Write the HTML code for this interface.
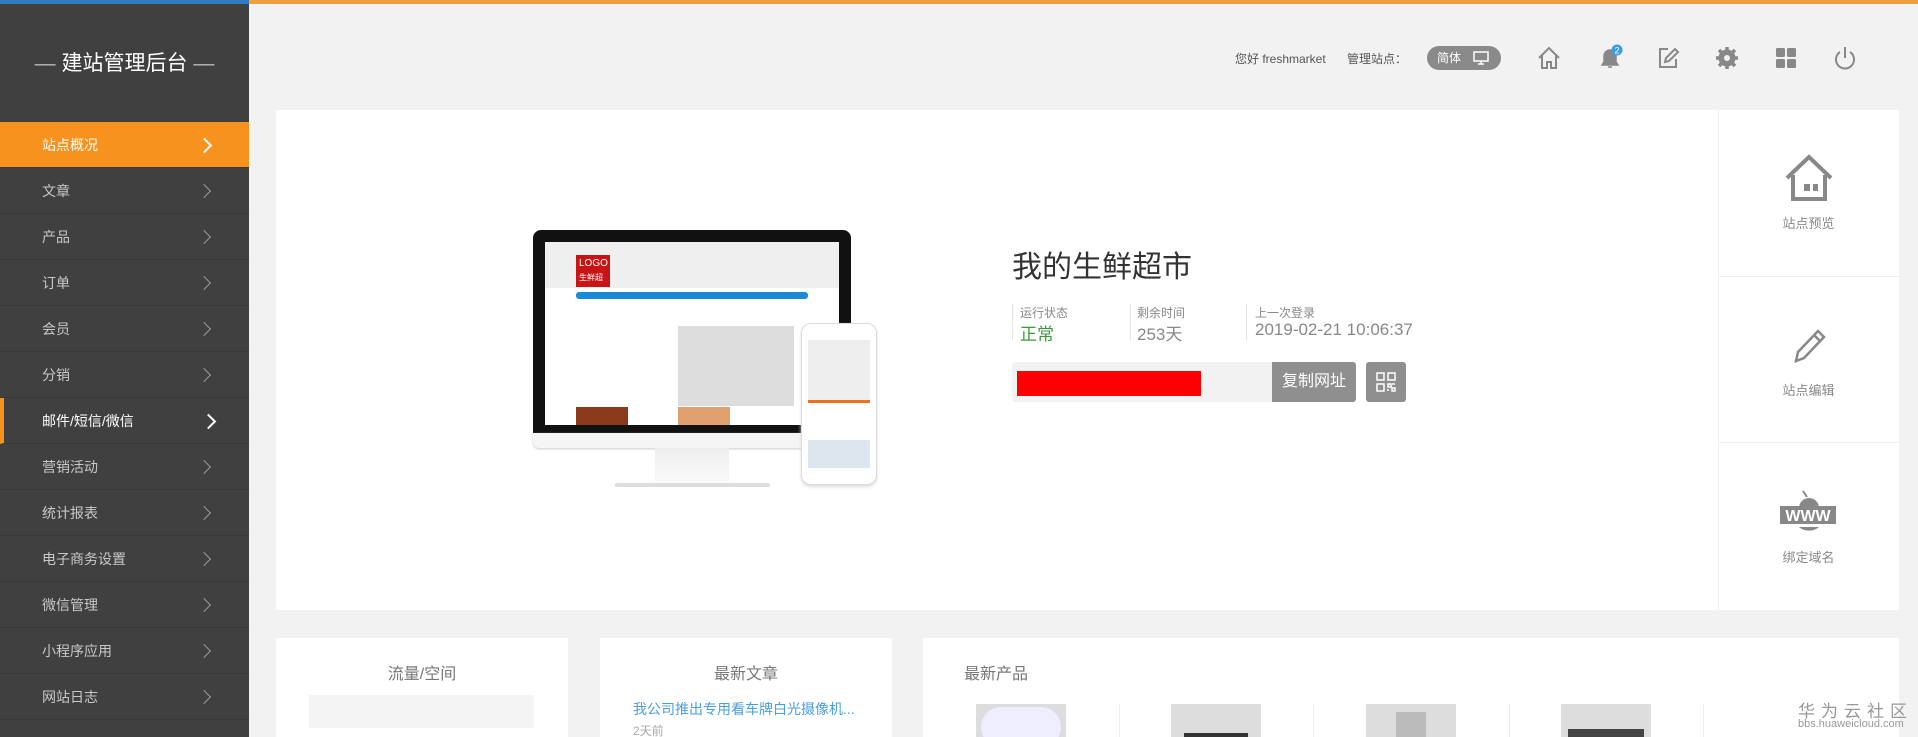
<!DOCTYPE html>
<html><head><meta charset="utf-8"><style>
*{margin:0;padding:0;box-sizing:border-box}
html{width:1918px;height:737px;overflow:hidden}
body{width:1918px;height:737px;overflow:hidden;background:#f2f2f2;font-family:"Liberation Sans","Noto Sans CJK SC",sans-serif;position:relative}
.a{position:absolute}
#side{left:0;top:0;width:249px;height:737px;background:#404040}
.mi{position:absolute;left:0;width:249px;height:46px;border-bottom:1px solid #383838;color:#c8c8c8;font-size:14px;line-height:46px;padding-left:42px}
.mi:after{content:"";position:absolute;left:199px;top:18px;width:9px;height:9px;border-right:1.5px solid #999;border-top:1.5px solid #999;transform:rotate(45deg)}
.mi.on{background:#f7921e;color:#fff}
.mi.on:after,.mi.b:after{border-color:#fff;border-width:2px}
.mi.b{color:#fff;border-left:4px solid #f7921e;padding-left:38px}
.card{background:#fff}
.lab{font-size:12px;color:#888}
.gi{fill:none;stroke:#888;stroke-width:2}
</style></head><body>
<div class="a" style="left:0;top:0;width:249px;height:4px;background:#2f7bbd"></div>
<div class="a" style="left:249px;top:0;width:1669px;height:4px;background:#f0a040"></div>
<div id="side" class="a" style="top:4px;height:733px"></div>
<div class="a" style="left:0;top:50px;width:249px;text-align:center;color:#fff;font-size:21px;line-height:28px"><span style="color:#bbb">— </span>建站管理后台<span style="color:#bbb"> —</span></div>
<div class="mi on" style="top:122px">站点概况</div>
<div class="mi" style="top:168px">文章</div>
<div class="mi" style="top:214px">产品</div>
<div class="mi" style="top:260px">订单</div>
<div class="mi" style="top:306px">会员</div>
<div class="mi" style="top:352px">分销</div>
<div class="mi b" style="top:398px">邮件/短信/微信</div>
<div class="mi" style="top:444px">营销活动</div>
<div class="mi" style="top:490px">统计报表</div>
<div class="mi" style="top:536px">电子商务设置</div>
<div class="mi" style="top:582px">微信管理</div>
<div class="mi" style="top:628px">小程序应用</div>
<div class="mi" style="top:674px">网站日志</div>

<!-- header -->
<div class="a" style="left:1235px;top:50px;font-size:12px;color:#555">您好 freshmarket</div>
<div class="a" style="left:1347px;top:50px;font-size:12px;color:#555">管理站点：</div>
<div class="a" style="left:1427px;top:46px;width:74px;height:24px;border-radius:12px;background:#8a8a8a;color:#fff;font-size:12px;line-height:24px;padding-left:10px">简体
<svg class="a" style="left:46px;top:5px" width="16" height="14"><rect x="1" y="1" width="14" height="9" fill="none" stroke="#fff" stroke-width="1.5"/><path d="M5 13h6M8 10v3" stroke="#fff" stroke-width="1.5"/></svg></div>
<svg class="a" style="left:1536px;top:45px" width="26" height="26"><path class="gi" d="M3 13L13 3l10 10M6 10v13h5v-6h4v6h5V10"/></svg>
<svg class="a" style="left:1597px;top:44px" width="28" height="28"><path d="M5 21h16l-2-3v-6a6 6 0 0 0-12 0v6z M11 23h4" fill="#888" stroke="#888" stroke-width="1.5"/><circle cx="20" cy="6" r="5.5" fill="#3b9de3"/><text x="20" y="9.5" font-size="9" fill="#fff" text-anchor="middle" font-family="Liberation Sans">2</text></svg>
<svg class="a" style="left:1656px;top:46px" width="24" height="24"><path class="gi" d="M12 3H4v18h16v-8M9 16l1-4 9-9 3 3-9 9z"/></svg>
<svg class="a" style="left:1715px;top:46px" width="24" height="24"><circle cx="12" cy="12" r="6" fill="none" stroke="#888" stroke-width="5"/><path d="M12 1v22M1 12h22M4 4l16 16M20 4L4 20" stroke="#888" stroke-width="3.5"/><circle cx="12" cy="12" r="3" fill="#f2f2f2"/></svg>
<svg class="a" style="left:1775px;top:47px" width="22" height="22"><rect x="1" y="1" width="9" height="9" rx="1.5" fill="#888"/><rect x="12" y="1" width="9" height="9" rx="1.5" fill="#888"/><rect x="1" y="12" width="9" height="9" rx="1.5" fill="#888"/><rect x="12" y="12" width="9" height="9" rx="1.5" fill="#888"/></svg>
<svg class="a" style="left:1833px;top:45px" width="24" height="26"><path class="gi" d="M7 7a9 9 0 1 0 10 0M12 2v11"/></svg>

<!-- main card -->
<div class="a card" style="left:276px;top:110px;width:1623px;height:500px"></div>
<div class="a" style="left:1718px;top:110px;width:1px;height:500px;background:#eee"></div>
<div class="a" style="left:1718px;top:276px;width:181px;height:1px;background:#eee"></div>
<div class="a" style="left:1718px;top:442px;width:181px;height:1px;background:#eee"></div>
<svg class="a" style="left:1784px;top:153px" width="50" height="50"><path d="M3 25L25 4l22 21" fill="none" stroke="#888" stroke-width="4"/><path d="M9 22v24h32V22" fill="none" stroke="#888" stroke-width="4"/><rect x="20" y="31" width="6" height="7" fill="#888"/><rect x="29" y="31" width="5" height="7" fill="#888"/></svg>
<div class="a lab" style="left:1718px;top:213px;width:181px;text-align:center;font-size:13px">站点预览</div>
<svg class="a" style="left:1790px;top:325px" width="40" height="40"><path d="M6 36l2-9L28 6l6 6-20 21z M24 10l6 6" fill="none" stroke="#888" stroke-width="2.5"/></svg>
<div class="a lab" style="left:1718px;top:380px;width:181px;text-align:center;font-size:13px">站点编辑</div>
<svg class="a" style="left:1779px;top:488px" width="60" height="50"><circle cx="30" cy="20" r="10" fill="#888"/><path d="M24 3l4 6" stroke="#888" stroke-width="2"/><rect x="1" y="18" width="56" height="18" fill="#888"/><text x="29" y="33" font-size="16" font-weight="bold" fill="#fff" text-anchor="middle" font-family="Liberation Sans">WWW</text><path d="M20 39a12 8 0 0 0 20 0z" fill="#888"/></svg>
<div class="a lab" style="left:1718px;top:547px;width:181px;text-align:center;font-size:13px">绑定域名</div>

<!-- monitor -->
<div class="a" style="left:533px;top:230px;width:318px;height:203px;background:#111;border-radius:8px 8px 0 0"></div>
<div class="a" style="left:545px;top:242px;width:294px;height:183px;background:#fff"></div>
<div class="a" style="left:545px;top:242px;width:294px;height:46px;background:#efefef"></div>
<div class="a" style="left:576px;top:255px;width:34px;height:32px;background:#c81414;color:#fff;font-size:10px;line-height:14px;padding:2px 3px">LOGO<br><span style="font-size:8px">生鲜超市</span></div>
<div class="a" style="left:576px;top:292px;width:232px;height:7px;background:#1a8ad8;border-radius:3px"></div>
<div class="a" style="left:678px;top:326px;width:116px;height:80px;background:#ddd"></div>
<div class="a" style="left:576px;top:407px;width:52px;height:18px;background:#8a3a1a"></div>
<div class="a" style="left:678px;top:407px;width:52px;height:18px;background:#e0a070"></div>
<div class="a" style="left:533px;top:433px;width:318px;height:15px;background:#f5f5f5;border-radius:0 0 6px 6px;box-shadow:0 1px 2px #ccc"></div>
<div class="a" style="left:655px;top:448px;width:74px;height:35px;background:linear-gradient(#eee,#fafafa)"></div>
<div class="a" style="left:615px;top:483px;width:155px;height:4px;background:#ddd;border-radius:2px"></div>
<div class="a" style="left:801px;top:323px;width:76px;height:162px;background:#fff;border:1px solid #ddd;border-radius:10px;box-shadow:0 2px 3px #ddd"></div>
<div class="a" style="left:808px;top:340px;width:62px;height:60px;background:#eee"></div>
<div class="a" style="left:808px;top:400px;width:62px;height:3px;background:#f07020"></div>
<div class="a" style="left:808px;top:440px;width:62px;height:28px;background:#dde6ee"></div>

<!-- site info -->
<div class="a" style="left:1012px;top:250px;font-size:30px;color:#333;line-height:36px">我的生鲜超市</div>
<div class="a" style="left:1012px;top:304px;width:1px;height:36px;background:#e5e5e5"></div>
<div class="a" style="left:1130px;top:304px;width:1px;height:36px;background:#e5e5e5"></div>
<div class="a" style="left:1246px;top:304px;width:1px;height:36px;background:#e5e5e5"></div>
<div class="a lab" style="left:1020px;top:304px">运行状态</div>
<div class="a lab" style="left:1137px;top:304px">剩余时间</div>
<div class="a lab" style="left:1255px;top:304px">上一次登录</div>
<div class="a" style="left:1020px;top:320px;font-size:17px;color:#3a9a3a">正常</div>
<div class="a" style="left:1137px;top:320px;font-size:17px;color:#888">253天</div>
<div class="a" style="left:1255px;top:320px;font-size:17px;color:#888">2019-02-21 10:06:37</div>
<div class="a" style="left:1012px;top:362px;width:260px;height:40px;background:#f2f2f2;border-radius:3px 0 0 3px"></div>
<div class="a" style="left:1017px;top:371px;width:184px;height:25px;background:#f00"></div>
<div class="a" style="left:1272px;top:362px;width:84px;height:40px;background:#8f8f8f;color:#fff;font-size:16px;line-height:40px;text-align:center;border-radius:0 3px 3px 0">复制网址</div>
<div class="a" style="left:1366px;top:362px;width:40px;height:40px;background:#8f8f8f;border-radius:3px"></div>
<svg class="a" style="left:1376px;top:372px" width="20" height="20"><path d="M1 1h7v7H1zM12 1h7v7h-7zM1 12h7v7H1z" fill="none" stroke="#fff" stroke-width="1.5"/><path d="M12 12h3v3h-3zM16 16h3v3h-3zM16 12h3M12 17v2" stroke="#fff" stroke-width="1.5" fill="none"/></svg>

<!-- bottom cards -->
<div class="a card" style="left:276px;top:638px;width:292px;height:99px"></div>
<div class="a" style="left:276px;top:660px;width:292px;text-align:center;font-size:16px;color:#777">流量/空间</div>
<div class="a" style="left:309px;top:695px;width:225px;height:33px;background:#f4f4f4"></div>
<div class="a card" style="left:600px;top:638px;width:292px;height:99px"></div>
<div class="a" style="left:600px;top:660px;width:292px;text-align:center;font-size:16px;color:#777">最新文章</div>
<div class="a" style="left:633px;top:699px;font-size:14px;color:#4a9ee0">我公司推出专用看车牌白光摄像机...</div>
<div class="a" style="left:633px;top:722px;font-size:12px;color:#aaa">2天前</div>
<div class="a card" style="left:923px;top:638px;width:976px;height:99px"></div>
<div class="a" style="left:964px;top:660px;font-size:16px;color:#777">最新产品</div>
<div class="a" style="left:976px;top:704px;width:90px;height:33px;background:#ddd;overflow:hidden"><div class="a" style="left:5px;top:3px;width:80px;height:40px;border-radius:40px;background:#eef"></div></div>
<div class="a" style="left:1171px;top:704px;width:90px;height:33px;background:#ddd"><div class="a" style="left:13px;top:29px;width:64px;height:4px;background:#333"></div></div>
<div class="a" style="left:1366px;top:704px;width:90px;height:33px;background:#ddd"><div class="a" style="left:30px;top:8px;width:30px;height:25px;background:#bbb"></div></div>
<div class="a" style="left:1561px;top:704px;width:90px;height:33px;background:#ddd"><div class="a" style="left:7px;top:25px;width:76px;height:8px;background:#444"></div></div>
<div class="a" style="left:1119px;top:704px;width:1px;height:33px;background:#eee"></div>
<div class="a" style="left:1313px;top:704px;width:1px;height:33px;background:#eee"></div>
<div class="a" style="left:1509px;top:704px;width:1px;height:33px;background:#eee"></div>
<div class="a" style="left:1703px;top:704px;width:1px;height:33px;background:#eee"></div>
<div class="a" style="left:1798px;top:697px;font-size:17px;color:#999;letter-spacing:6px">华为云社区</div>
<div class="a" style="left:1798px;top:718px;font-size:11px;color:#999">bbs.huaweicloud.com</div>
</body></html>
